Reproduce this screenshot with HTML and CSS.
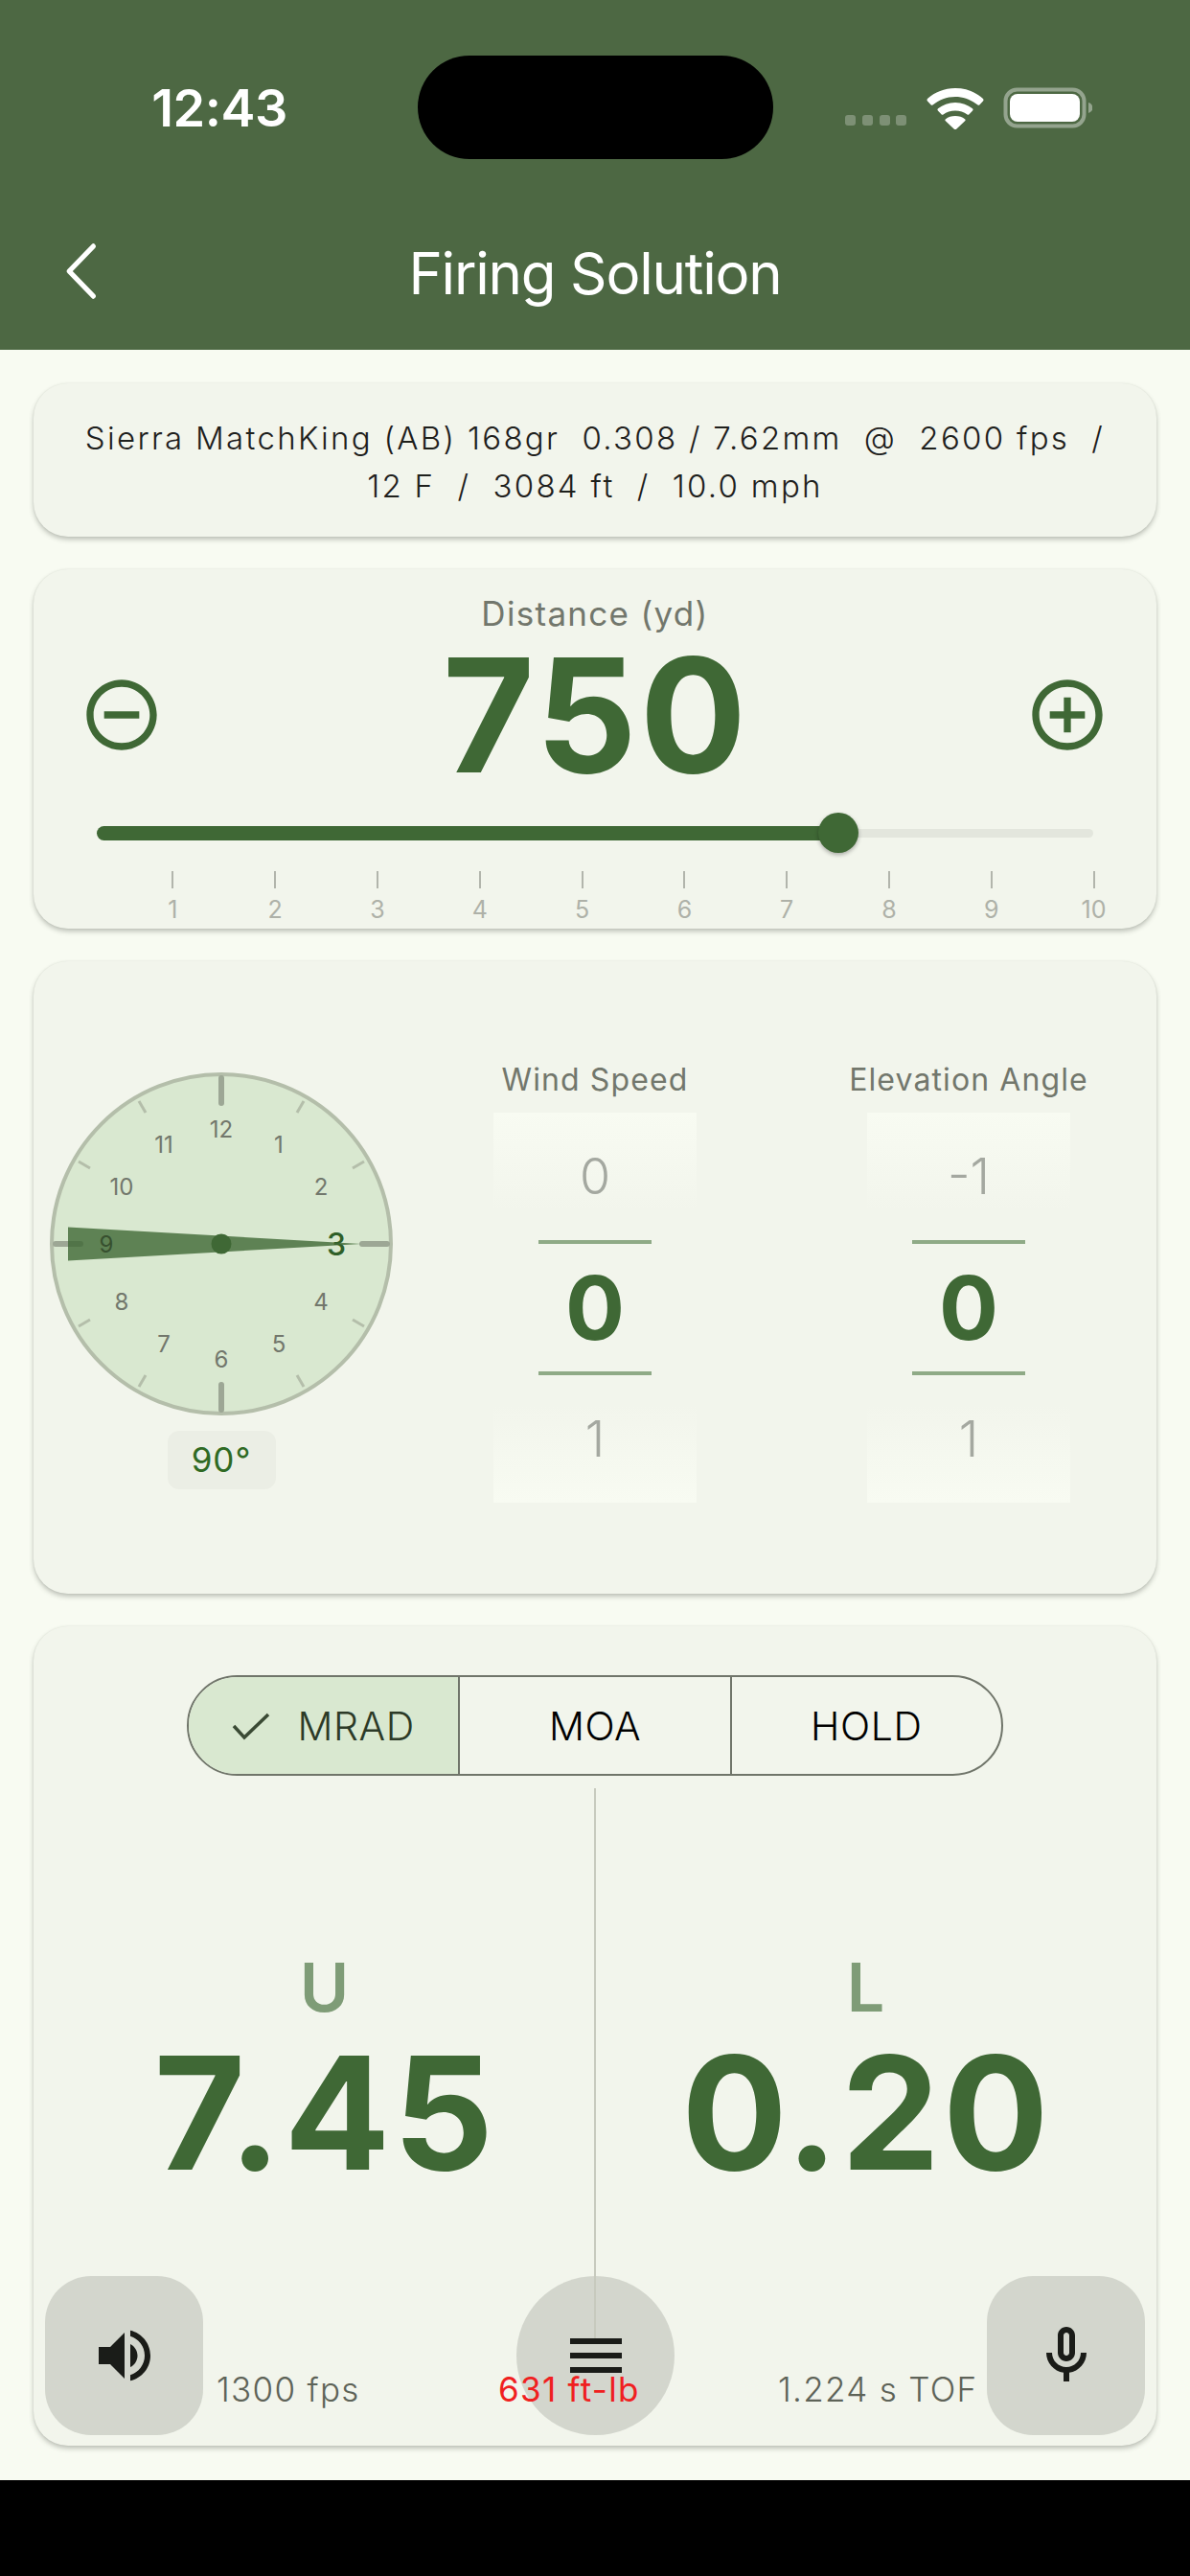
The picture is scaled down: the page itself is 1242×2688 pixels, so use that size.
FILE: index.html
```html
<!DOCTYPE html>
<html lang="en">
<head>
<meta charset="utf-8">
<title>Firing Solution</title>
<link rel="stylesheet" href="styles.css">
</head>
<body>
<div class="page">
  <header class="header">
    <div class="status">
      <div class="status-left"><span class="time">12:43</span></div>
      <div class="island"></div>
      <div class="status-right">
        <svg class="status-icons" width="258" height="45" viewBox="0 0 258 45">
          <g fill="#fff" fill-opacity=".27">
            <rect x="0" y="30" width="11" height="11" rx="3"/>
            <rect x="18" y="30" width="11" height="11" rx="3"/>
            <rect x="36" y="30" width="11" height="11" rx="3"/>
            <rect x="53" y="30" width="11" height="11" rx="3"/>
          </g>
          <path fill="#fff" d="M115 2c-11.500 0-21 4-29 11a2 2 0 0 0 0 2.500l3.500 3.800a1.500 1.500 0 0 0 2 .1C98 14.500 106 11 115 11s17 3.500 23.500 8.400a1.500 1.500 0 0 0 2-.1l3.500-3.800a2 2 0 0 0 0-2.500C136 6 126.500 2 115 2z"/>
          <path fill="#fff" d="M115 17c-7 0-13 2.300-18 6.300a1.500 1.500 0 0 0-.1 2.200l3.600 3.800a1.500 1.500 0 0 0 2 .1c3.400-2.600 7.700-4 12.500-4s9.100 1.400 12.500 4a1.500 1.500 0 0 0 2-.1l3.600-3.800a1.500 1.500 0 0 0-.1-2.200C128 19.300 122 17 115 17z"/>
          <path fill="#fff" d="M115 31c-4 0-7.300 1.200-10 3.200a1.300 1.300 0 0 0-.1 2l8.700 8.300a2 2 0 0 0 2.800 0l8.700-8.300a1.300 1.300 0 0 0-.1-2C122.300 32.200 119 31 115 31z"/>
          <rect x="167.500" y="3.500" width="82" height="38" rx="12" fill="none" stroke="#fff" stroke-opacity=".4" stroke-width="4"/>
          <rect x="172" y="8" width="73" height="29" rx="8" fill="#fff"/>
          <path d="M254 17c3 1 4.500 3 4.500 5.500S257 27 254 28z" fill="#fff" fill-opacity=".4"/>
        </svg>
      </div>
    </div>
    <div class="appbar">
      <svg class="back" width="40" height="62" viewBox="0 0 40 62"><path d="M36 5 8 31l28 26" transform="matrix(.9 0 0 1 2 0)" fill="none" stroke="#fff" stroke-width="5.500" stroke-linecap="round" stroke-linejoin="round"/></svg>
      <h1 class="title">Firing Solution</h1>
    </div>
  </header>

  <main class="main">
    <section class="card card-info">
      <p class="info-line">Sierra MatchKing (AB) 168gr  0.308 / 7.62mm  @  2600 fps  /</p>
      <p class="info-line">12 F  /  3084 ft  /  10.0 mph</p>
    </section>

    <section class="card card-distance">
      <div class="field-label field-label-large">Distance (yd)</div>
      <div class="distance-row">
        <svg class="circle-icon" viewBox="0 0 24 24"><path d="M7 11v2h10v-2H7zm5-9C6.480 2 2 6.480 2 12s4.480 10 10 10 10-4.480 10-10S17.520 2 12 2zm0 18c-4.410 0-8-3.590-8-8s3.590-8 8-8 8 3.590 8 8-3.590 8-8 8z"/></svg>
        <div class="distance-value">750</div>
        <svg class="circle-icon" viewBox="0 0 24 24"><path d="M13 7h-2v4H7v2h4v4h2v-4h4v-2h-4V7zm-1-5C6.480 2 2 6.480 2 12s4.480 10 10 10 10-4.480 10-10S17.520 2 12 2zm0 18c-4.410 0-8-3.590-8-8s3.590-8 8-8 8 3.590 8 8-3.590 8-8 8z"/></svg>
      </div>
      <div class="slider">
        <div class="slider-active"></div>
        <div class="slider-rest"></div>
        <div class="slider-thumb"></div>
      </div>
      <div class="scale">
        <div class="scale-item"><i class="scale-tick"></i><span class="scale-num">1</span></div>
        <div class="scale-item"><i class="scale-tick"></i><span class="scale-num">2</span></div>
        <div class="scale-item"><i class="scale-tick"></i><span class="scale-num">3</span></div>
        <div class="scale-item"><i class="scale-tick"></i><span class="scale-num">4</span></div>
        <div class="scale-item"><i class="scale-tick"></i><span class="scale-num">5</span></div>
        <div class="scale-item"><i class="scale-tick"></i><span class="scale-num">6</span></div>
        <div class="scale-item"><i class="scale-tick"></i><span class="scale-num">7</span></div>
        <div class="scale-item"><i class="scale-tick"></i><span class="scale-num">8</span></div>
        <div class="scale-item"><i class="scale-tick"></i><span class="scale-num">9</span></div>
        <div class="scale-item"><i class="scale-tick"></i><span class="scale-num">10</span></div>
      </div>
    </section>

    <section class="card card-wind">
      <div class="clock-col">
        <svg class="clock" width="358" height="358" viewBox="-179 -179 358 358">
          <circle r="177" class="clock-face"/>
          <g class="tick-major">
            <line x1="0" y1="-173" x2="0" y2="-147"/>
            <line x1="173" y1="0" x2="147" y2="0"/>
            <line x1="0" y1="173" x2="0" y2="147"/>
            <line x1="-173" y1="0" x2="-147" y2="0"/>
          </g>
          <g class="tick-minor">
            <line x1="86" y1="-149" x2="79" y2="-137"/>
            <line x1="149" y1="-86" x2="137" y2="-79"/>
            <line x1="149" y1="86" x2="137" y2="79"/>
            <line x1="86" y1="149" x2="79" y2="137"/>
            <line x1="-86" y1="149" x2="-79" y2="137"/>
            <line x1="-149" y1="86" x2="-137" y2="79"/>
            <line x1="-149" y1="-86" x2="-137" y2="-79"/>
            <line x1="-86" y1="-149" x2="-79" y2="-137"/>
          </g>
          <g class="clock-num">
            <text x="0" y="-120">12</text>
            <text x="60" y="-104">1</text>
            <text x="104" y="-60">2</text>
            <text x="104" y="60">4</text>
            <text x="60" y="104">5</text>
            <text x="0" y="120">6</text>
            <text x="-60" y="104">7</text>
            <text x="-104" y="60">8</text>
            <text x="-104" y="-60">10</text>
            <text x="-60" y="-104">11</text>
          </g>
          <text class="clock-num-active" x="120" y="0">3</text>
          <polygon class="wedge" points="146,0 -160,-17.500 -160,17.500"/>
          <text class="clock-num-covered" x="-120" y="0">9</text>
          <circle r="10.500" class="clock-hub"/>
        </svg>
        <div class="angle-chip">90°</div>
      </div>
      <div class="wheel-col wheel-col-first">
        <div class="field-label">Wind Speed</div>
        <div class="wheel">
          <div class="wheel-item">0</div>
          <div class="wheel-item wheel-item-current">0</div>
          <div class="wheel-item">1</div>
        </div>
      </div>
      <div class="wheel-col">
        <div class="field-label">Elevation Angle</div>
        <div class="wheel">
          <div class="wheel-item">-1</div>
          <div class="wheel-item wheel-item-current">0</div>
          <div class="wheel-item">1</div>
        </div>
      </div>
    </section>

    <section class="card card-result">
      <div class="segments">
        <div class="segment segment-on">
          <svg class="check" width="40" height="30" viewBox="0 0 40 30"><path d="M2 15 13 27 38 3" fill="none" stroke="#3a4a34" stroke-width="3.500"/></svg>
          <span>MRAD</span>
        </div>
        <div class="segment">MOA</div>
        <div class="segment">HOLD</div>
      </div>
      <div class="results">
        <div class="result">
          <div class="result-dir">U</div>
          <div class="result-value">7.45</div>
        </div>
        <div class="results-rule"></div>
        <div class="result">
          <div class="result-dir">L</div>
          <div class="result-value">0.20</div>
        </div>
      </div>
      <div class="stats">
        <span class="stat">1300 fps</span>
        <span class="stat stat-alert">631 ft-lb</span>
        <span class="stat">1.224 s TOF</span>
      </div>
      <div class="fab fab-left">
        <svg width="72" height="72" viewBox="0 0 24 24"><path d="M3 9v6h4l5 5V4L7 9H3zm13.500 3c0-1.770-1.020-3.290-2.500-4.030v8.050c1.480-.73 2.500-2.250 2.500-4.020zM14 3.230v2.060c2.890.86 5 3.540 5 6.710s-2.110 5.850-5 6.710v2.060c4.010-.91 7-4.490 7-8.770s-2.990-7.860-7-8.770z"/></svg>
      </div>
      <div class="fab fab-center">
        <svg width="72" height="72" viewBox="0 0 24 24"><path d="M3 18h18v-2H3v2zm0-5h18v-2H3v2zm0-7v2h18V6H3z"/></svg>
      </div>
      <div class="fab fab-right">
        <svg width="72" height="72" viewBox="0 0 24 24"><path d="M12 14c1.660 0 3-1.340 3-3V5c0-1.660-1.340-3-3-3S9 3.340 9 5v6c0 1.660 1.340 3 3 3zm-1-9c0-.55.45-1 1-1s1 .45 1 1v6c0 .55-.45 1-1 1s-1-.45-1-1V5zm6 6c0 2.760-2.240 5-5 5s-5-2.240-5-5H5c0 3.530 2.610 6.430 6 6.920V21h2v-3.080c3.390-.49 6-3.390 6-6.920h-2z"/></svg>
      </div>
    </section>
  </main>

  <div class="home-bar"></div>
</div>
</body>
</html>
```

FILE: styles.css
```css
* { box-sizing: border-box; }
html, body { margin: 0; padding: 0; }
body { font-family: Inter, "Liberation Sans", sans-serif; background: #000; }

.page {
  width: 1242px;
  height: 2688px;
  display: flex;
  flex-direction: column;
  background: #f8fbf2;
  overflow: hidden;
}

/* Header */
.header { height: 365px; background: #4d6843; color: #fff; flex: none; }
.status { display: flex; height: 200px; padding-top: 58px; }
.status-left { width: 436px; height: 108px; padding-left: 22px; display: flex; align-items: center; justify-content: center; }
.time { font-size: 54px; font-weight: 600; letter-spacing: -.5px; }
.island { width: 371px; height: 108px; border-radius: 54px; background: #000; }
.status-right { flex: 1; height: 108px; padding-left: 75px; display: flex; align-items: center; }
.appbar { height: 165px; display: flex; align-items: center; position: relative; justify-content: center; padding-top: 4px; }
.back { position: absolute; left: 63px; top: 52px; }
.title { margin: 0; font-size: 60px; font-weight: 400; letter-spacing: -1.200px; line-height: 80px; }

/* Main */
.main { flex: 1; padding: 35px 35px 0; display: flex; flex-direction: column; gap: 34px; }
.card {
  background: #f2f5ec;
  border-radius: 36px;
  box-shadow: 0 3px 5px rgba(60, 65, 55, .3), 0 0 2px rgba(60, 65, 55, .1);
  position: relative;
  flex: none;
}

/* Info */
.card-info { height: 160px; padding-top: 32px; }
.info-line { margin: 0; text-align: center; font-size: 33px; line-height: 50px; letter-spacing: 2.300px; font-weight: 300; color: #1e201c; white-space: pre; }

/* Distance */
.card-distance { height: 375px; padding-top: 26px; }
.field-label { font-size: 32px; line-height: 40px; letter-spacing: 1.100px; color: #72776c; text-align: center; white-space: nowrap; }
.field-label-large { font-size: 35px; letter-spacing: 1.300px; }
.distance-row { margin-top: 6px; height: 160px; padding: 0 49px 0 48px; display: flex; align-items: center; justify-content: space-between; }
.circle-icon { width: 88px; height: 88px; fill: #3f6835; }
.distance-value { margin-left: 3px; font-size: 165px; line-height: 160px; font-weight: 700; color: #3f6835; letter-spacing: 3px; }
.slider { position: relative; margin: 22px 66px 0; height: 42px; display: flex; align-items: center; }
.slider-active { width: 774px; height: 15px; background: #3f6835; border-radius: 8px 0 0 8px; }
.slider-rest { flex: 1; height: 9px; background: #e3e6dd; border-radius: 0 5px 5px 0; }
.slider-thumb { position: absolute; left: 753px; top: 0; width: 42px; height: 42px; border-radius: 50%; background: #3f6835; box-shadow: 0 2px 4px rgba(0, 0, 0, .3); }
.scale { margin: 19px 0 0 92px; width: 1068px; display: grid; grid-template-columns: repeat(10, 1fr); }
.scale-item { display: flex; flex-direction: column; align-items: center; }
.scale-tick { width: 2px; height: 18px; background: #b2b5ac; }
.scale-num { margin-top: 7px; font-size: 25px; line-height: 30px; color: #aeb1a8; }

/* Wind */
.card-wind { height: 660px; display: flex; padding-left: 17px; }
.clock-col { width: 358px; padding-top: 116px; display: flex; flex-direction: column; align-items: center; flex: none; }
.clock { display: block; }
.clock-face { fill: #d9e8d0; stroke: #b4beaa; stroke-width: 4; }
.tick-major line { stroke: #9da795; stroke-width: 6; stroke-linecap: round; }
.tick-minor line { stroke: #b4beaa; stroke-width: 3; }
.clock-num text { font-size: 24px; fill: #72776c; text-anchor: middle; dominant-baseline: central; }
.clock-num-active { font-size: 32px; font-weight: 500; fill: #2f5f28; text-anchor: middle; dominant-baseline: central; }
.clock-num-covered { font-size: 24px; fill: #37502f; text-anchor: middle; dominant-baseline: central; }
.wedge { fill: #3f6835; fill-opacity: .8; }
.clock-hub { fill: #3f6835; }
.angle-chip { margin-top: 16px; width: 113px; height: 61px; border-radius: 12px; background: #ebeee5; color: #2f6a24; font-size: 35px; line-height: 61px; text-align: center; letter-spacing: 1px; }
.wheel-col { width: 212px; margin-left: 178px; padding-top: 104px; display: flex; flex-direction: column; align-items: center; flex: none; }
.wheel-col-first { margin-left: 105px; }
.wheel { margin-top: 14px; width: 212px; height: 407px; display: flex; flex-direction: column; align-items: center; background: linear-gradient(#f8fbf2, #f2f5ec 25%, #f2f5ec 75%, #f8fbf2); }
.wheel-item { flex: 1; width: 118px; display: flex; align-items: center; justify-content: center; font-size: 52px; font-weight: 300; color: #a4a8a0; }
.wheel-item-current { font-size: 92px; font-weight: 700; color: #3f6835; border-top: 4px solid #8faa86; border-bottom: 4px solid #8faa86; }

/* Result */
.card-result { flex: 1; margin-bottom: 36px; padding-top: 51px; }
.segments { position: relative; margin: 0 auto; width: 852px; height: 105px; display: flex; border: 2.500px solid #70756a; border-radius: 53px; overflow: hidden; }
.segment { flex: 1; display: flex; align-items: center; justify-content: center; font-size: 41px; font-weight: 300; color: #000; border-left: 2px solid #70756a; letter-spacing: .6px; }
.segment:first-child { border-left: 0; }
.segment-on { background: #d9e8d0; color: #2c3a27; gap: 28px; }
.check { flex: none; }
.results { position: relative; z-index: 1; margin: 13px 22px 0; height: 574px; display: grid; grid-template-columns: 1fr 2px 1fr; }
.results-rule { background: #c7cabe; }
.result { padding-top: 168px; text-align: center; }
.result-dir { font-size: 70px; line-height: 80px; font-weight: 600; color: #7f9c77; }
.result-value { margin-top: 6px; margin-left: 2px; font-size: 164px; line-height: 170px; font-weight: 700; color: #3f6835; letter-spacing: 3px; }
.stats { position: relative; z-index: 1; margin-top: 33px; padding-left: 191px; display: grid; grid-template-columns: 294px 292px auto; font-size: 35px; font-weight: 300; line-height: 40px; color: #5e6358; letter-spacing: 1.300px; white-space: nowrap; }
.stat-alert { color: #f02020; font-weight: 400; }
.fab { position: absolute; bottom: 11px; width: 165px; height: 166px; background: #d3d6cd; border-radius: 48px; display: flex; align-items: center; justify-content: center; fill: #1a1c18; }
.fab-left { left: 12px; }
.fab-center { left: 504px; border-radius: 50%; }
.fab-right { right: 12px; }

.home-bar { height: 100px; background: #000; flex: none; }
```
